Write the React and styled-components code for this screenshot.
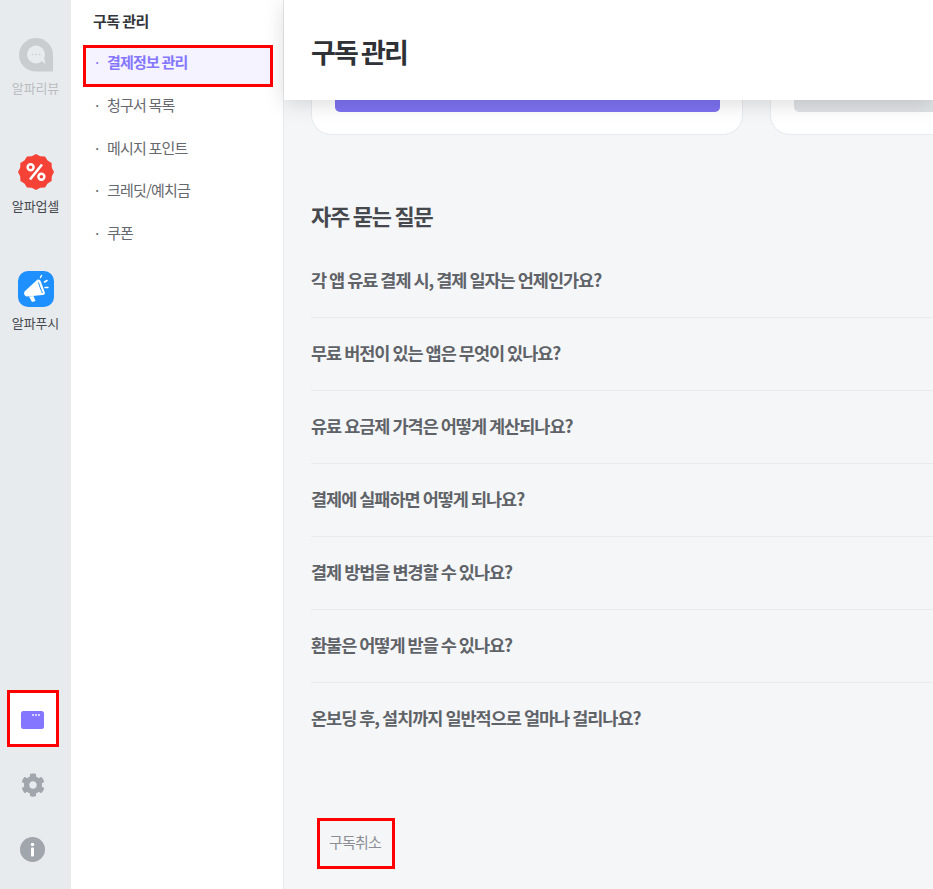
import styled, { createGlobalStyle } from 'styled-components';
import { FaCog } from 'react-icons/fa';

const GlobalStyle = createGlobalStyle`
    html, body {
        margin: 0;
        padding: 0;
        height: 100%;
        overflow: hidden;
    }
    body {
        font-family: "Noto Sans CJK KR", "Noto Sans", sans-serif;
        background: #f5f6f8;
    }
    * {
        box-sizing: border-box;
    }
`;

const menuItems = ['결제정보 관리', '청구서 목록', '메시지 포인트', '크레딧/예치금', '쿠폰'];

const faqItems = [
    '각 앱 유료 결제 시, 결제 일자는 언제인가요?',
    '무료 버전이 있는 앱은 무엇이 있나요?',
    '유료 요금제 가격은 어떻게 계산되나요?',
    '결제에 실패하면 어떻게 되나요?',
    '결제 방법을 변경할 수 있나요?',
    '환불은 어떻게 받을 수 있나요?',
    '온보딩 후, 설치까지 일반적으로 얼마나 걸리나요?',
];

const ReviewIcon = () => (
    <svg width="34" height="34" viewBox="0 0 34 34">
        <path d="M17 0C7.600 0 0 7.600 0 17S7.600 33.500 17 33.500H34V17C34 7.600 26.400 0 17 0Z" fill="#c9cdd0" />
        <circle cx="17" cy="16.500" r="9" fill="#e8ebee" />
        <path d="M21 22L26.500 26L24.500 18Z" fill="#e8ebee" />
        <circle cx="13.500" cy="16.500" r="0.800" fill="#c9cdd0" />
        <circle cx="17" cy="16.500" r="0.800" fill="#c9cdd0" />
        <circle cx="20.500" cy="16.500" r="0.800" fill="#c9cdd0" />
    </svg>
);

const UpsellIcon = () => {
    const points = [];
    for (let i = 0; i < 24; i++) {
        const r = i % 2 === 0 ? 18 : 16.4;
        const a = (i * Math.PI) / 12;
        points.push(`${18 + r * Math.sin(a)},${18 - r * Math.cos(a)}`);
    }
    return (
        <svg width="36" height="36" viewBox="0 0 36 36">
            <polygon points={points.join(' ')} fill="#f44336" />
            <circle cx="12.600" cy="13.200" r="3" fill="none" stroke="#fff" strokeWidth="2.400" />
            <circle cx="23.400" cy="22.800" r="3" fill="none" stroke="#fff" strokeWidth="2.400" />
            <path d="M24 10.500L12 25.500" stroke="#fff" strokeWidth="2.600" />
        </svg>
    );
};

const PushIcon = () => (
    <svg width="36" height="36" viewBox="0 0 36 36">
        <rect width="36" height="36" rx="10" fill="#1e90ff" />
        <path d="M6.500 20.500L19 9C20.500 8 22 8.500 23 11L26.500 20.500C27.500 23 26.500 24 24.500 24L9 25.500C6.500 25.500 5.500 22 6.500 20.500Z" fill="#fff" />
        <path d="M11 25.500L15.500 25L17.500 30L14 31Z" fill="#fff" />
        <path d="M22.500 6.500l1-2M26.500 11l2.500-1.500M27 16.500h3" stroke="#fff" strokeWidth="1.500" strokeLinecap="round" />
        <path d="M20.500 11.500C21.500 15 23 19 24.500 22" stroke="#1e90ff" strokeWidth="1" fill="none" />
    </svg>
);

const BillingIcon = () => (
    <svg width="23" height="18" viewBox="0 0 23 18">
        <rect width="23" height="18" rx="2.500" fill="#8476ff" />
        <circle cx="12" cy="4" r="0.900" fill="#fff" />
        <circle cx="15" cy="4" r="0.900" fill="#fff" />
        <circle cx="18" cy="4" r="0.900" fill="#fff" />
    </svg>
);

const InfoIcon = () => (
    <svg width="25" height="25" viewBox="0 0 25 25">
        <circle cx="12.500" cy="12.500" r="12.500" fill="#a1a5ac" />
        <circle cx="12.500" cy="7.500" r="1.800" fill="#fff" />
        <rect x="11" y="10.500" width="3" height="9" rx="0.800" fill="#fff" />
    </svg>
);

const App = () => {
    return (
        <Page>
            <GlobalStyle />
            <Rail>
                <RailApp $top={38}>
                    <ReviewIcon />
                    <RailLabel $muted>알파리뷰</RailLabel>
                </RailApp>
                <RailApp $top={57}>
                    <UpsellIcon />
                    <RailLabel>알파업셀</RailLabel>
                </RailApp>
                <RailApp $top={56}>
                    <PushIcon />
                    <RailLabel>알파푸시</RailLabel>
                </RailApp>
                <RailBottom>
                    <BillingButton>
                        <BillingIcon />
                    </BillingButton>
                    <RailIconSlot $height={75}>
                        <FaCog size={24} color="#a1a5ac" />
                    </RailIconSlot>
                    <RailIconSlot $height={55}>
                        <InfoIcon />
                    </RailIconSlot>
                </RailBottom>
            </Rail>
            <Sidebar>
                <SidebarTitle>구독 관리</SidebarTitle>
                <Menu>
                    {menuItems.map((label, index) => (
                        <MenuItem key={label} $active={index === 0}>
                            <Bullet>·</Bullet>
                            {label}
                        </MenuItem>
                    ))}
                </Menu>
            </Sidebar>
            <Main>
                <Header>
                    <PageTitle>구독 관리</PageTitle>
                </Header>
                <Content>
                    <PlanRow>
                        <PlanCard>
                            <PlanButton $primary />
                        </PlanCard>
                        <PlanCard>
                            <PlanButton />
                        </PlanCard>
                    </PlanRow>
                    <FaqTitle>자주 묻는 질문</FaqTitle>
                    <FaqList>
                        {faqItems.map((question) => (
                            <FaqRow key={question}>{question}</FaqRow>
                        ))}
                    </FaqList>
                    <CancelButton>구독취소</CancelButton>
                </Content>
            </Main>
        </Page>
    );
};

export default App;

const Page = styled.div`
    display: flex;
    width: 933px;
    height: 889px;
    overflow: hidden;
`;

const Rail = styled.nav`
    display: flex;
    flex-direction: column;
    align-items: center;
    flex: none;
    width: 71px;
    background: #e8ebee;
`;

const RailApp = styled.div`
    display: flex;
    flex-direction: column;
    align-items: center;
    margin-top: ${(props) => props.$top}px;
    svg {
        margin-left: 1px;
    }
`;

const RailLabel = styled.span`
    margin-top: 7px;
    font-size: 13px;
    line-height: 18px;
    letter-spacing: -0.1px;
    color: ${(props) => (props.$muted ? '#b9bdc2' : '#45484d')};
`;

const RailBottom = styled.div`
    display: flex;
    flex-direction: column;
    align-items: center;
    width: 100%;
    margin-top: auto;
    padding: 0 6px 12px 0;
`;

const BillingButton = styled.div`
    display: flex;
    align-items: center;
    justify-content: center;
    width: 52px;
    height: 57px;
    padding-top: 2px;
    background: #fff;
    border: 3px solid #f00;
`;

const RailIconSlot = styled.div`
    display: flex;
    align-items: center;
    justify-content: center;
    height: ${(props) => props.$height}px;
`;

const Sidebar = styled.aside`
    flex: none;
    width: 213px;
    padding: 10px 10px 0 12px;
    background: #fff;
    border-right: 1px solid #e8ebee;
`;

const SidebarTitle = styled.div`
    height: 21px;
    padding-left: 10px;
    font-size: 15px;
    line-height: 21px;
    font-weight: 700;
    letter-spacing: -0.6px;
    color: #33363a;
`;

const Menu = styled.ul`
    margin: 14px 0 0;
    padding: 0;
    list-style: none;
`;

const MenuItem = styled.li`
    display: flex;
    align-items: center;
    height: ${(props) => (props.$active ? '42px' : '42.750px')};
    padding-left: ${(props) => (props.$active ? '7px' : '10px')};
    padding-bottom: ${(props) => (props.$active ? '9px' : '8px')};
    font-size: 15px;
    letter-spacing: -0.800px;
    font-weight: ${(props) => (props.$active ? 700 : 400)};
    color: ${(props) => (props.$active ? '#8476ff' : '#66696e')};
    background: ${(props) => (props.$active ? '#f4f3ff' : 'transparent')};
    border: ${(props) => (props.$active ? '3px solid #f00' : 'none')};
`;

const Bullet = styled.span`
    width: 14px;
    font-weight: 400;
`;

const Main = styled.main`
    display: flex;
    flex-direction: column;
    flex: 1;
    min-width: 0;
    background: #f5f6f8;
`;

const Header = styled.header`
    position: relative;
    z-index: 1;
    display: flex;
    align-items: center;
    flex: none;
    height: 100px;
    padding: 2px 27px 0;
    background: #fff;
    box-shadow: 0 4px 20px rgba(0, 0, 0, 0.14);
`;

const PageTitle = styled.h1`
    margin: 0;
    font-size: 27px;
    font-weight: 700;
    letter-spacing: -1.900px;
    color: #2e3135;
`;

const Content = styled.div`
    flex: 1;
    padding: 0 0 0 27px;
    overflow: hidden;
`;

const PlanRow = styled.div`
    display: flex;
    gap: 27px;
`;

const PlanCard = styled.div`
    flex: none;
    width: 432px;
    height: 35px;
    padding: 0 22px 0 23px;
    background: #fff;
    border: 1px solid #e8ebee;
    border-top: none;
    border-radius: 0 0 20px 20px;
`;

const PlanButton = styled.div`
    height: 12px;
    background: ${(props) => (props.$primary ? '#7d72f0' : '#dfe2e5')};
    border-radius: 0 0 5px 5px;
`;

const FaqTitle = styled.h2`
    margin: 64px 0 0;
    font-size: 22px;
    line-height: 32px;
    font-weight: 700;
    letter-spacing: -1.250px;
    color: #45484d;
`;

const FaqList = styled.div`
    margin-top: 14px;
`;

const FaqRow = styled.div`
    display: flex;
    align-items: center;
    height: 73px;
    padding-bottom: 4px;
    font-size: 17.500px;
    font-weight: 700;
    letter-spacing: -1px;
    color: #5f6368;
    border-bottom: 1px solid #e8ebee;
    &:last-child {
        border-bottom: none;
    }
`;

const CancelButton = styled.button`
    display: flex;
    align-items: center;
    justify-content: center;
    width: 78px;
    height: 51px;
    margin: 62px 0 0 6px;
    padding: 0 2px 5px 0;
    font-family: inherit;
    font-size: 15px;
    letter-spacing: -0.800px;
    color: #8b8f95;
    background: transparent;
    border: 3px solid #f00;
`;
